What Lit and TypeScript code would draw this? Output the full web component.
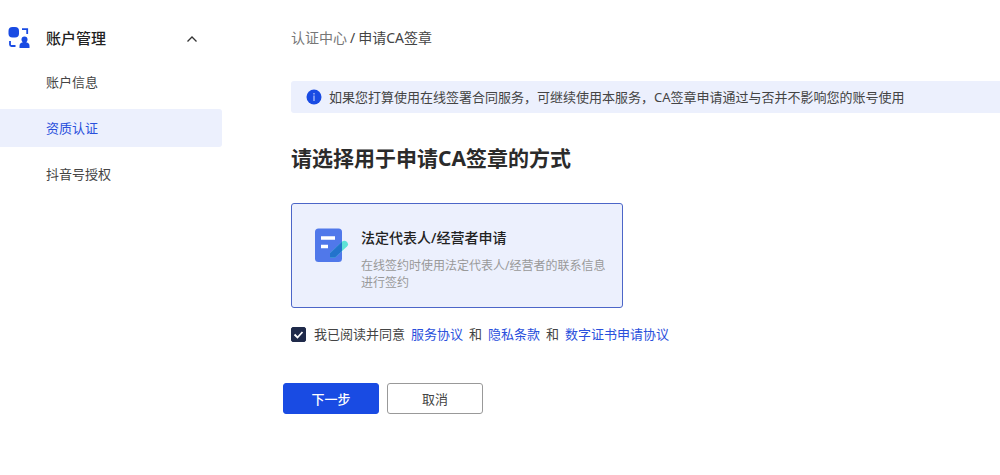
import { LitElement, html, css } from "lit";
import { customElement, state } from "lit/decorators.js";

const MENU = ["账户信息", "资质认证", "抖音号授权"];

@customElement("app-root")
export class AppRoot extends LitElement {
  static styles = css`
    :host {
      display: flex;
      min-height: 100vh;
      background: #fff;
      color: #444;
      font: 13px/20px "Noto Sans", "Noto Sans CJK SC", sans-serif;
    }
    * { box-sizing: border-box; }
    a { color: #2a50dc; text-decoration: none; }
    button { font: inherit; color: inherit; cursor: pointer; }
    .side { flex: 0 0 222px; padding-top: 20px; }
    .group {
      display: flex;
      align-items: center;
      width: 100%;
      height: 36px;
      padding: 0 24px 0 8px;
      border: 0;
      background: none;
      font-size: 15px;
      font-weight: 500;
      color: #222;
    }
    .logo { flex: none; margin-right: 16px; }
    .arrow { margin-left: auto; }
    .menu {
      display: grid;
      gap: 8px;
      margin: 7px 0 0;
      padding: 0;
      list-style: none;
    }
    .item {
      display: flex;
      align-items: center;
      height: 38px;
      padding-left: 46px;
      border-radius: 0 3px 3px 0;
      color: #444;
    }
    .item.active { background: #ecf0fd; color: #2a50dc; }
    .main { flex: 1; min-width: 0; padding: 28px 0 0 61px; }
    .content { padding-left: 8px; }
    .crumbs { display: flex; gap: 3px; font-size: 14px; }
    .crumbs a { color: #777; }
    .notice {
      display: flex;
      align-items: center;
      gap: 7px;
      min-height: 32px;
      margin-top: 33px;
      padding: 0 15px;
      border-radius: 3px 0 0 3px;
      background: #ecf0fd;
    }
    .notice svg { flex: none; }
    h1 {
      margin: 29px 0 0;
      font-size: 21px;
      line-height: 32px;
      font-weight: 700;
      color: #2b2b2b;
    }
    .card {
      display: flex;
      align-items: flex-start;
      gap: 12px;
      width: 332px;
      max-width: 100%;
      margin-top: 29px;
      padding: 24px 16px 16px 22px;
      border: 1px solid #4c66c8;
      border-radius: 3px;
      background: #ecf0fd;
      text-align: left;
    }
    .card svg { flex: none; }
    .name { display: block; font-size: 14px; font-weight: 500; color: #222; }
    .desc {
      display: block;
      margin-top: 9px;
      font-size: 12px;
      line-height: 17px;
      color: #999;
    }
    .agree {
      display: flex;
      flex-wrap: wrap;
      align-items: center;
      gap: 6px;
      margin-top: 16px;
    }
    .agree label { display: flex; align-items: center; gap: 8px; }
    .agree input {
      appearance: none;
      width: 15px;
      height: 15px;
      margin: 0;
      border: 1px solid #1f2a4a;
      border-radius: 2px;
    }
    .agree input:checked {
      background: #1f2a4a url("data:image/svg+xml,%3Csvg xmlns='http://www.w3.org/2000/svg' viewBox='0 0 13 13'%3E%3Cpath d='M2.5 6.5l3 3 5-5.5' fill='none' stroke='white' stroke-width='1.8'/%3E%3C/svg%3E") center / 13px no-repeat;
    }
    .actions { display: flex; gap: 8px; margin-top: 39px; }
    .btn {
      width: 96px;
      height: 31px;
      padding: 0;
      border: 1px solid #999;
      border-radius: 3px;
      background: #fff;
    }
    .btn.primary {
      border-color: #194be3;
      background: #194be3;
      color: #fff;
      font-weight: 500;
    }
  `;

  @state() private open = true;
  @state() private active = 1;

  render() {
    return html`
      <nav class="side">
        <button class="group" aria-expanded=${this.open} @click=${() => (this.open = !this.open)}>
          <svg class="logo" width="22" height="22" viewBox="0 0 22 22" aria-hidden="true">
            <rect x="0.5" y="0" width="10.5" height="10.5" rx="4" fill="#194be3" />
            <path d="M14 2.2h5.2V7M2 14v3.5q0 1.5 1.5 1.5H7.5" fill="none" stroke="#194be3" stroke-width="1.8" />
            <circle cx="16.5" cy="12.5" r="3" fill="#194be3" />
            <path d="M14.8 13h3.4v2.2q3.3.6 3.3 3.8v2H11.5v-2q0-3.2 3.3-3.8z" fill="#194be3" />
          </svg>
          <span>账户管理</span>
          <svg class="arrow" width="12" height="8" viewBox="0 0 12 8" aria-hidden="true">
            <path d="M1.5 7.5L6 3 10.5 7.5" fill="none" stroke="#333" stroke-width="1.3" />
          </svg>
        </button>
        ${this.open
          ? html`<ul class="menu">
              ${MENU.map(
                (text, i) => html`<li>
                  <a class="item ${i === this.active ? "active" : ""}" href="#" @click=${() => (this.active = i)}>${text}</a>
                </li>`
              )}
            </ul>`
          : ""}
      </nav>
      <main class="main">
        <div class="content">
          <div class="crumbs"><a href="#">认证中心</a><span>/</span><span>申请CA签章</span></div>
          <div class="notice">
            <svg width="16" height="16" viewBox="0 0 16 16" aria-hidden="true">
              <circle cx="8" cy="8" r="7.5" fill="#194be3" />
              <path d="M8 4v1.4M8 6.6V12" stroke="#b9c9fa" stroke-width="1.2" />
            </svg>
            <span>如果您打算使用在线签署合同服务，可继续使用本服务，CA签章申请通过与否并不影响您的账号使用</span>
          </div>
          <h1>请选择用于申请CA签章的方式</h1>
          <button class="card">
            <svg width="35" height="36" viewBox="0 0 35 36" aria-hidden="true">
              <rect x="1" y="0.5" width="27" height="33.5" rx="3.5" fill="#5078ea" />
              <path d="M7 10h14M7 18.5h7" stroke="#fff" stroke-width="3.4" />
              <path d="M16 29.5v-4.2L28.2 13.6q2.2-1.9 4.6.2 2.3 2.3.2 4.8L21 29.5z" fill="#5ee3d6" />
              <path d="M16 29.5v-4.2L28 13.8V23l-7 6.5z" fill="#2373cc" />
            </svg>
            <span>
              <span class="name">法定代表人/经营者申请</span>
              <span class="desc">在线签约时使用法定代表人/经营者的联系信息进行签约</span>
            </span>
          </button>
          <div class="agree">
            <label><input type="checkbox" checked /><span>我已阅读并同意</span></label>
            <a href="#">服务协议</a><span>和</span><a href="#">隐私条款</a><span>和</span><a href="#">数字证书申请协议</a>
          </div>
        </div>
        <div class="actions">
          <button class="btn primary">下一步</button>
          <button class="btn">取消</button>
        </div>
      </main>
    `;
  }
}
